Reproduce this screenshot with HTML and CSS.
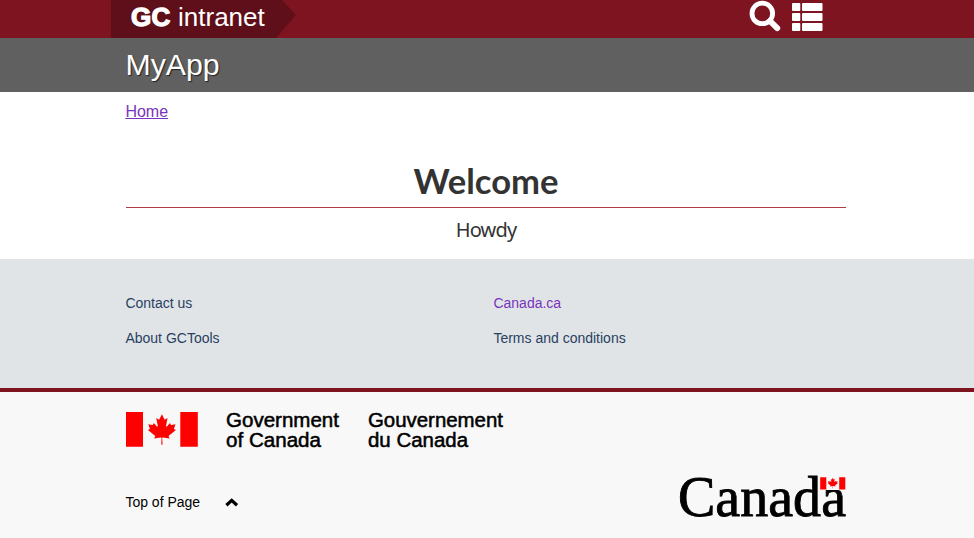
FILE: index.html
```html
<!DOCTYPE html>
<html lang="en">
<head>
<meta charset="utf-8">
<title>MyApp</title>
<link rel="stylesheet" href="styles.css">
</head>
<body>
<svg class="defs" width="0" height="0" aria-hidden="true">
  <symbol id="leaf" viewBox="-2030 -2030 4060 4060"><path d="m-90 2030 45-863a95 95 0 0 0-111-98l-859 151 116-320a65 65 0 0 0-20-73l-941-762 212-99a65 65 0 0 0 34-79l-186-572 542 115a65 65 0 0 0 73-38l105-247 423 454a65 65 0 0 0 111-57l-204-1052 327 189a65 65 0 0 0 91-27l332-652 332 652a65 65 0 0 0 91 27l327-189-204 1052a65 65 0 0 0 111 57l423-454 105 247a65 65 0 0 0 73 38l542-115-186 572a65 65 0 0 0 34 79l212 99-941 762a65 65 0 0 0-20 73l116 320-859-151a95 95 0 0 0-111 98l45 863z"/></symbol>
</svg>
<header>
  <div class="topbar">
    <div class="wrap topbar-row">
      <a class="brand" href="#"><b>GC</b> intranet</a>
      <div class="tools">
        <svg width="32" height="32" viewBox="0 0 32 32"><circle cx="13.3" cy="13.4" r="10.3" fill="none" stroke="#fff" stroke-width="4.8"/><path d="M21 21 28.2 28.2" stroke="#fff" stroke-width="5.9" stroke-linecap="round"/></svg>
        <svg width="31" height="29" viewBox="0 0 31 29" fill="#fff"><rect width="8.3" height="8" rx="1"/><rect x="10" width="20.5" height="8" rx="1"/><rect y="10" width="8.3" height="8" rx="1"/><rect x="10" y="10" width="20.5" height="8" rx="1"/><rect y="20" width="8.3" height="8" rx="1"/><rect x="10" y="20" width="20.5" height="8" rx="1"/></svg>
      </div>
    </div>
  </div>
  <div class="titlebar"><div class="wrap"><a href="#">MyApp</a></div></div>
</header>
<nav class="wrap crumbs"><a href="#">Home</a></nav>
<main class="wrap">
  <h1>Welcome</h1>
  <p>Howdy</p>
</main>
<footer>
  <div class="links">
    <div class="wrap links-grid">
      <a href="#">Contact us</a><a class="visited" href="#">Canada.ca</a>
      <a href="#">About GCTools</a><a href="#">Terms and conditions</a>
    </div>
  </div>
  <div class="site">
    <div class="wrap">
      <svg class="signature" width="390" height="40" viewBox="0 0 390 40">
        <g fill="#f00"><path d="M0 0h17v34.7H0zM54.3 0h17.5v34.7H54.3z"/><use href="#leaf" x="20.6" y="2.1" width="30.6" height="30.6"/></g>
        <g class="signature-text">
          <text x="100" y="15" textLength="113" lengthAdjust="spacingAndGlyphs">Government</text>
          <text x="100" y="34.6" textLength="95" lengthAdjust="spacingAndGlyphs">of Canada</text>
          <text x="242" y="15" textLength="135" lengthAdjust="spacingAndGlyphs">Gouvernement</text>
          <text x="242" y="34.6" textLength="100" lengthAdjust="spacingAndGlyphs">du Canada</text>
        </g>
      </svg>
      <div class="bottom">
        <a class="top-link" href="#">Top of Page
          <svg width="14" height="10" viewBox="0 0 14 10"><path d="m1.4 7.2 5.3-4.8 5.3 4.8" fill="none" stroke="#000" stroke-width="3.3"/></svg>
        </a>
        <svg class="wordmark" width="170" height="44" viewBox="0 0 170 44">
          <text x="0" y="40.2" textLength="168" lengthAdjust="spacingAndGlyphs">Canada</text>
          <path d="M141.6 1h28v13h-28z" fill="#f8f8f8"/>
          <g fill="#f00"><path d="M142.2 1.2h6.1v12.2h-6.1zM161.2 1.2h6.1v12.2h-6.1z"/><use href="#leaf" x="149.3" y="1.6" width="11" height="11"/></g>
        </svg>
      </div>
    </div>
  </div>
</footer>
</body>
</html>
```
FILE: styles.css
```css
* { box-sizing: border-box; }
body { margin: 0; background: #fff; font: 16px/1.4 "Liberation Sans", Arial, sans-serif; overflow: hidden; }
svg { display: block; overflow: visible; }
.defs { position: absolute; }
.wrap { width: 720px; margin-left: 126px; }
.topbar { height: 38px; background: #7f1421; }
.topbar-row { display: flex; justify-content: space-between; }
.brand { width: 186px; height: 38px; margin-left: -15px; padding-left: 20px; background: #5f0f19; clip-path: polygon(0 0, 171px 0, 185px 15px, 165px 38px, 0 38px); color: #fff; font-size: 26px; line-height: 34px; text-decoration: none; white-space: nowrap; }
.brand b { letter-spacing: .4px; -webkit-text-stroke: 1.3px #fff; }
.tools { display: flex; gap: 11px; margin-right: 23px; }
.tools svg:last-child { margin-top: 3px; }
.titlebar { height: 54px; background: #606060; }
.titlebar a { margin-left: -.6px; color: #fff; font-size: 30.3px; line-height: 54px; text-decoration: none; text-shadow: 1px 1px 1px #222; }
.crumbs { height: 62px; padding-top: 9px; }
.crumbs a { margin-left: -.6px; color: #7834bc; }
main { height: 105px; color: #333; text-align: center; }
h1 { height: 54px; margin: 0; border-bottom: 1px solid #af3c43; font: 700 34.6px/54px Lato, sans-serif; }
p { margin: 0; font: 20px/44px "Noto Sans", sans-serif; letter-spacing: -.8px; }
.links { height: 129px; padding-top: 33px; background: #e1e4e7; }
.links-grid { display: grid; grid-template-columns: 368px 352px; row-gap: 13px; }
.links-grid a { margin-left: -.6px; color: #284162; font-size: 14px; line-height: 22px; text-decoration: none; }
.links-grid .visited { color: #7834bc; }
.site { height: 150px; padding-top: 20px; border-top: 4px solid #7f1421; background: #f8f8f8; }
.signature-text { font: 19.5px "Liberation Sans", Arial, sans-serif; stroke: #000; stroke-width: .5px; }
.bottom { display: flex; justify-content: space-between; padding-top: 24px; }
.top-link { display: flex; align-items: center; gap: 25px; height: 53px; margin-left: -.6px; color: #000; font-size: 14px; text-decoration: none; }
.wordmark { margin-right: -2px; }
.wordmark text { font: 56px "Liberation Serif", serif; stroke: #000; stroke-width: .9px; }
```
